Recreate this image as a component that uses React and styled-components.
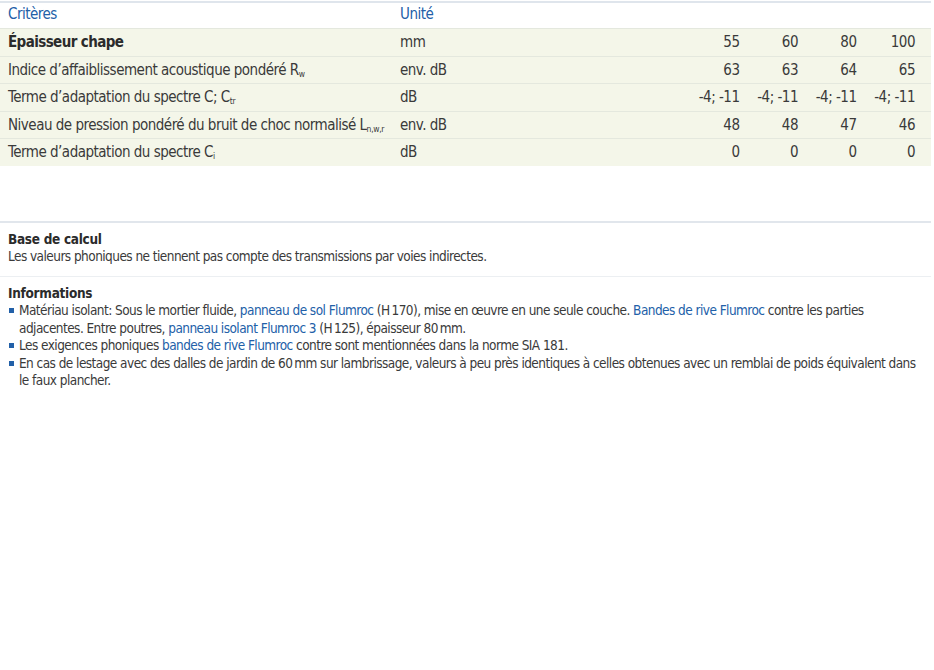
import React from "react";
import styled, { createGlobalStyle } from "styled-components";

const FONT = `"DejaVu Sans Condensed", "Liberation Sans Narrow", "Liberation Sans", sans-serif`;

const Global = createGlobalStyle`
  html, body { margin: 0; padding: 0; background: #fff; }
  body { font-family: ${FONT}; color: #353535; }
`;

const Page = styled.div`
  width: 931px;
  padding-top: 1px;
`;

const Table = styled.div`
  border-top: 2px solid #dfe5ec;
`;

const Row = styled.div`
  display: grid;
  grid-template-columns: 392px 1fr repeat(4, 58.5px);
  align-items: center;
  box-sizing: border-box;
  height: ${(p) => (p.$head ? "25px" : "27.5px")};
  padding-right: 16px;
  padding-bottom: ${(p) => (p.$head ? "4px" : "0")};
  background: ${(p) => (p.$head ? "#fff" : "#f4f6e9")};
  border-top: ${(p) => (p.$head ? "none" : "1px solid #e4e8de")};
  font-size: 15px;
  letter-spacing: -0.5px;
  color: ${(p) => (p.$head ? "#2260a8" : "#3a3a3a")};
`;

const Label = styled.div`
  padding-left: 8px;
  white-space: nowrap;
  font-weight: ${(p) => (p.$strong ? 700 : 400)};
  letter-spacing: ${(p) => (p.$strong ? "-0.6px" : "inherit")};
  color: ${(p) => (p.$strong ? "#2b2b2b" : "inherit")};
`;

const Unit = styled.div`
  padding-left: 8px;
  white-space: nowrap;
`;

const Num = styled.div`
  text-align: right;
  white-space: nowrap;
`;

const Sub = styled.sub`
  font-size: 8.5px;
  letter-spacing: -0.3px;
  vertical-align: -2px;
  line-height: 0;
`;

const Notes = styled.div`
  margin-top: 55px;
  border-top: 2px solid #e1e6ec;
`;

const NoteBlock = styled.div`
  padding: ${(p) => p.$pad};
  border-top: ${(p) => (p.$divider ? "1px solid #eceff2" : "none")};
  font-size: 13.5px;
  letter-spacing: -0.55px;
  line-height: 17.5px;
  color: #3a3a3a;
`;

const NoteTitle = styled.div`
  font-weight: 700;
  letter-spacing: -0.3px;
  color: #2b2b2b;
  padding-left: ${(p) => p.$indent || "0"};
`;

const List = styled.ul`
  margin: 0;
  padding: 0;
  list-style: none;
`;

const Item = styled.li`
  position: relative;
  padding-left: 19px;
  padding-right: 12px;
  &::before {
    content: "";
    position: absolute;
    left: 9px;
    top: 6px;
    width: 5px;
    height: 5px;
    background: #2260a8;
  }
`;

const Link = styled.span`
  color: #2260a8;
`;

const rows = [
  { label: "Épaisseur chape", strong: true, unit: "mm", vals: ["55", "60", "80", "100"] },
  { label: <>Indice d’affaiblissement acoustique pondéré R<Sub>w</Sub></>, unit: "env. dB", vals: ["63", "63", "64", "65"] },
  { label: <>Terme d’adaptation du spectre C; C<Sub>tr</Sub></>, unit: "dB", vals: ["-4; -11", "-4; -11", "-4; -11", "-4; -11"] },
  { label: <>Niveau de pression pondéré du bruit de choc normalisé L<Sub>n,w,r</Sub></>, unit: "env. dB", vals: ["48", "48", "47", "46"] },
  { label: <>Terme d’adaptation du spectre C<Sub>i</Sub></>, unit: "dB", vals: ["0", "0", "0", "0"] },
];

export default function App() {
  return (
    <>
      <Global />
      <Page>
        <Table>
          <Row $head>
            <Label>Critères</Label>
            <Unit>Unité</Unit>
          </Row>
          {rows.map((r, i) => (
            <Row key={i}>
              <Label $strong={r.strong}>{r.label}</Label>
              <Unit>{r.unit}</Unit>
              {r.vals.map((v, j) => (
                <Num key={j}>{v}</Num>
              ))}
            </Row>
          ))}
        </Table>
        <Notes>
          <NoteBlock $pad="8px 8px 10px">
            <NoteTitle>Base de calcul</NoteTitle>
            <div>Les valeurs phoniques ne tiennent pas compte des transmissions par voies indirectes.</div>
          </NoteBlock>
          <NoteBlock $divider $pad="8px 0 10px 0">
            <NoteTitle $indent="8px">Informations</NoteTitle>
            <List>
              <Item>
                Matériau isolant: Sous le mortier fluide, <Link>panneau de sol Flumroc</Link> (H&#8239;170), mise en œuvre en une seule couche. <Link>Bandes de rive Flumroc</Link> contre les parties adjacentes. Entre poutres, <Link>panneau isolant Flumroc 3</Link> (H&#8239;125), épaisseur 80&#8239;mm.
              </Item>
              <Item>
                Les exigences phoniques <Link>bandes de rive Flumroc</Link> contre sont mentionnées dans la norme SIA 181.
              </Item>
              <Item>
                En cas de lestage avec des dalles de jardin de 60&#8239;mm sur lambrissage, valeurs à peu près identiques à celles obtenues avec un remblai de poids équivalent dans le faux plancher.
              </Item>
            </List>
          </NoteBlock>
        </Notes>
      </Page>
    </>
  );
}
